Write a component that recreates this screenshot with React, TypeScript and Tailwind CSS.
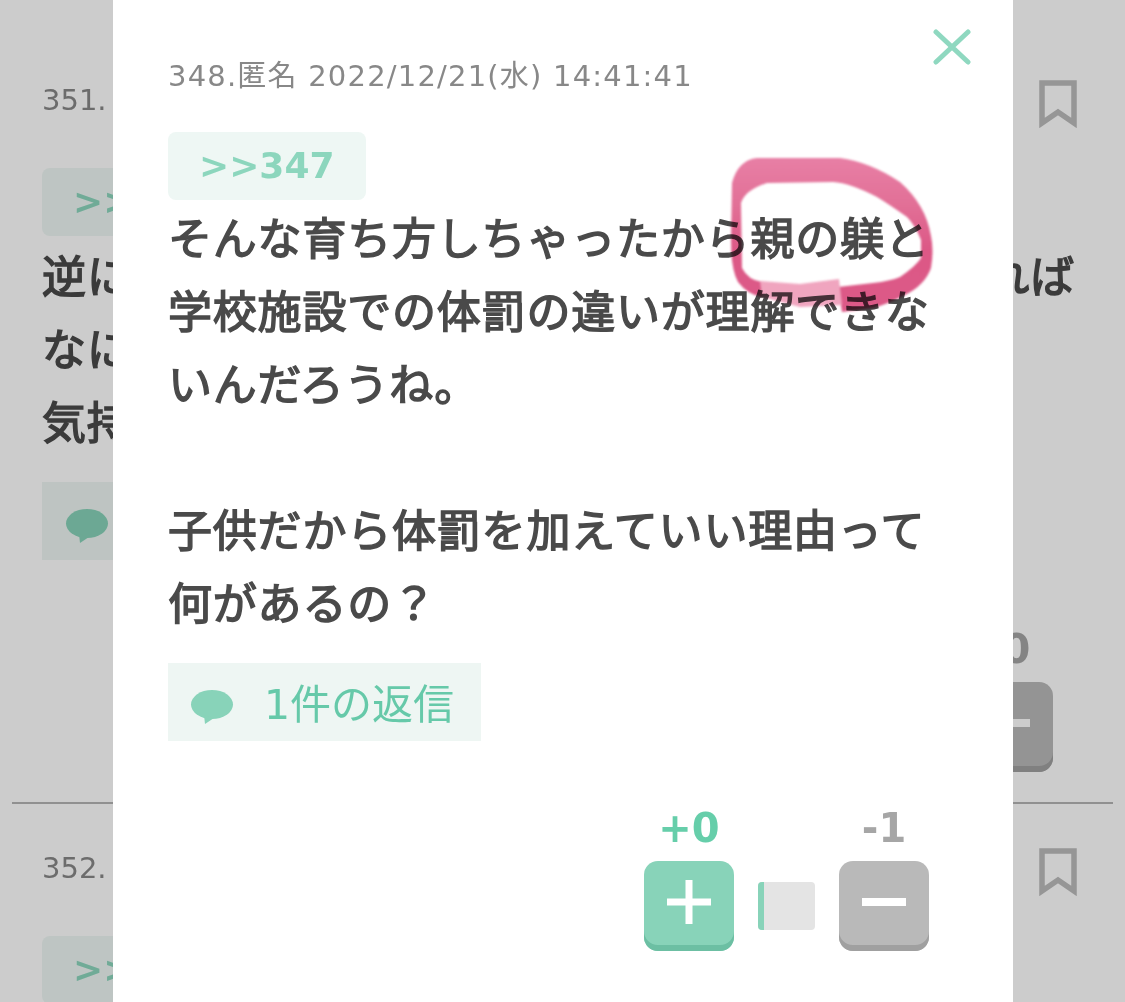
const FONT = "font-['DejaVu_Sans','Noto_Sans_CJK_JP',sans-serif]";

function Bookmark() {
  return (
    <svg width="38" height="48" viewBox="0 0 38 48" className="shrink-0">
      <path d="M3 3H35V43L19 32L3 43Z" fill="none" stroke="#bcbcbc" strokeWidth="5.5" />
    </svg>
  );
}

function Bubble() {
  return (
    <svg width="44" height="36" viewBox="0 0 44 36" className="shrink-0 mt-[12px]">
      <ellipse cx="22" cy="14.5" rx="21" ry="14.5" fill="#88d3b9" />
      <path d="M14 25L15 34L24 28Z" fill="#88d3b9" />
    </svg>
  );
}

function BackgroundRow({ no, lines, divider }: { no: string; lines?: string[][]; divider?: boolean }) {
  return (
    <div>
      {divider && <div className="mx-3 h-[2px] bg-[#b4b4b4]" />}
      <div className={`px-[42px] ${divider ? "pt-[44px]" : "pt-[46px]"}`}>
        <div className="flex justify-between items-start">
          <span className="text-[29px] leading-[40px] text-[#888888]">{no}</span>
          <div className="mr-[6px]"><Bookmark /></div>
        </div>
        <div className="mt-[40px] w-[198px] h-[68px] rounded-lg bg-[#eef7f4] flex items-center pl-[31px] text-[36px] font-bold text-[#8cd6bd]">
          &gt;&gt;346
        </div>
        {lines && (
          <>
            <div className="mt-[5px] text-[44px] leading-[73px] tracking-[0.8px] text-[#4a4a4a] [-webkit-text-stroke:1.5px_#4a4a4a]">
              {lines.map((l, i) => (
                <div key={i} className="flex justify-between pr-[8px]">
                  <span>{l[0]}</span>
                  <span>{l[1]}</span>
                </div>
              ))}
            </div>
            <div className="mt-[22px] w-[313px] h-[78px] bg-[#eef6f3] flex items-center pl-[23px]">
              <Bubble />
            </div>
            <div className="flex justify-end pr-[30px] mt-[65px] mb-[30px]">
              <div className="flex flex-col items-center w-[90px]">
                <div className="h-[48px] text-[40px] font-bold text-[#a6a6a6] leading-[48px]">-0</div>
                <div className="mt-[9px] w-[90px] h-[90px] pb-[8px] rounded-[14px] bg-[#b9b9b9] shadow-[inset_0_-6px_0_#a0a0a0] flex items-center justify-center">
                  <div className="w-[44px] h-[8px] bg-white" />
                </div>
              </div>
            </div>
          </>
        )}
      </div>
    </div>
  );
}

export default function App() {
  return (
    <div className={`relative w-[1125px] h-[1002px] overflow-hidden bg-white ${FONT}`}>
      <div className="pt-[34px]">
        <BackgroundRow
          no="351."
          lines={[
            ["逆に", "れば"],
            ["なに", ""],
            ["気持", ""],
          ]}
        />
        <BackgroundRow no="352." divider />
      </div>

      <div className="absolute inset-0 bg-black/20" />

      <div className="absolute left-[113px] top-0 bottom-0 w-[900px] bg-white pl-[55px] pr-[82px] pt-[56px]">
        <svg width="38" height="36" viewBox="0 0 38 36" className="absolute left-[820px] top-[29px]">
          <path d="M3 3L35 33M35 3L3 33" stroke="#8fd8c0" strokeWidth="5" strokeLinecap="round" fill="none" />
        </svg>

        <div className="text-[29px] leading-[40px] tracking-[1.2px] text-[#888888] whitespace-nowrap">348.匿名 2022/12/21(水) 14:41:41</div>

        <div className="mt-[36px] w-[198px] h-[68px] rounded-lg bg-[#eef7f4] flex items-center pl-[31px] text-[36px] font-bold text-[#8cd6bd]">
          &gt;&gt;347
        </div>

        <div className="w-[780px] pt-[3px] text-[44px] leading-[73px] tracking-[0.8px] text-[#4a4a4a] [-webkit-text-stroke:1.5px_#4a4a4a] whitespace-nowrap">
          <div>そんな育ち方しちゃったから親の躾と</div>
          <div>学校施設での体罰の違いが理解できな</div>
          <div>いんだろうね。</div>
          <div className="h-[73px]" />
          <div>子供だから体罰を加えていい理由って</div>
          <div>何があるの？</div>
        </div>

        <div className="mt-[22px] w-[313px] h-[78px] bg-[#eef6f3] flex items-center pl-[22px] gap-[30px]">
          <Bubble />
          <span className="pt-[8px] text-[41px] text-[#66c9a9] whitespace-nowrap">1件の返信</span>
        </div>

        <div className="mt-[63px] pr-[2px] flex justify-end items-end gap-[24px]">
          <div className="flex flex-col items-center w-[90px]">
            <div className="h-[48px] text-[40px] leading-[48px] font-bold text-[#66ceaa]">+0</div>
            <div className="mt-[9px] w-[90px] h-[90px] pb-[8px] rounded-[14px] bg-[#88d3b9] shadow-[inset_0_-6px_0_#6cbfa3] flex items-center justify-center">
              <svg width="44" height="44" viewBox="0 0 44 44">
                <path d="M22 0V44M0 22H44" stroke="white" strokeWidth="7" />
              </svg>
            </div>
          </div>
          <div className="mb-[21px] w-[57px] h-[48px] rounded-[4px] bg-[#e4e4e4] overflow-hidden">
            <div className="w-[6px] h-full bg-[#88d3b9]" />
          </div>
          <div className="flex flex-col items-center w-[90px]">
            <div className="h-[48px] text-[40px] leading-[48px] font-bold text-[#a6a6a6]">-1</div>
            <div className="mt-[9px] w-[90px] h-[90px] pb-[8px] rounded-[14px] bg-[#b9b9b9] shadow-[inset_0_-6px_0_#a0a0a0] flex items-center justify-center">
              <div className="w-[44px] h-[8px] bg-white" />
            </div>
          </div>
        </div>
      </div>

      <svg width="1125" height="1002" viewBox="0 0 1125 1002" className="absolute inset-0 mix-blend-multiply pointer-events-none blur-[1px]">
        <defs>
          <linearGradient id="ink" x1="0" y1="0" x2="0" y2="1">
            <stop offset="0" stopColor="#e87fa5" />
            <stop offset="0.3" stopColor="#e27097" />
            <stop offset="0.6" stopColor="#dc5886" />
            <stop offset="1" stopColor="#dc5a88" />
          </linearGradient>
        </defs>
        <path
          d="M842 312L873 308Q888 304 905 295Q925 285 931 268Q934 250 931 236Q926 205 900 182Q870 162 840 158L757 158Q738 160 732 183L731 240Q731 270 738 282Q748 295 762 297L762 282Q748 280 742 268L741 203Q745 190 767 183L833 182Q850 183 877 197Q890 205 907 217Q915 225 921 240L921 258Q916 266 900 277Q890 281 873 283L838 287Z"
          fill="url(#ink)"
        />
        <path d="M760 281L800 284L839 279L842 305L800 307L762 297Z" fill="#f0a5bf" />
      </svg>
    </div>
  );
}
